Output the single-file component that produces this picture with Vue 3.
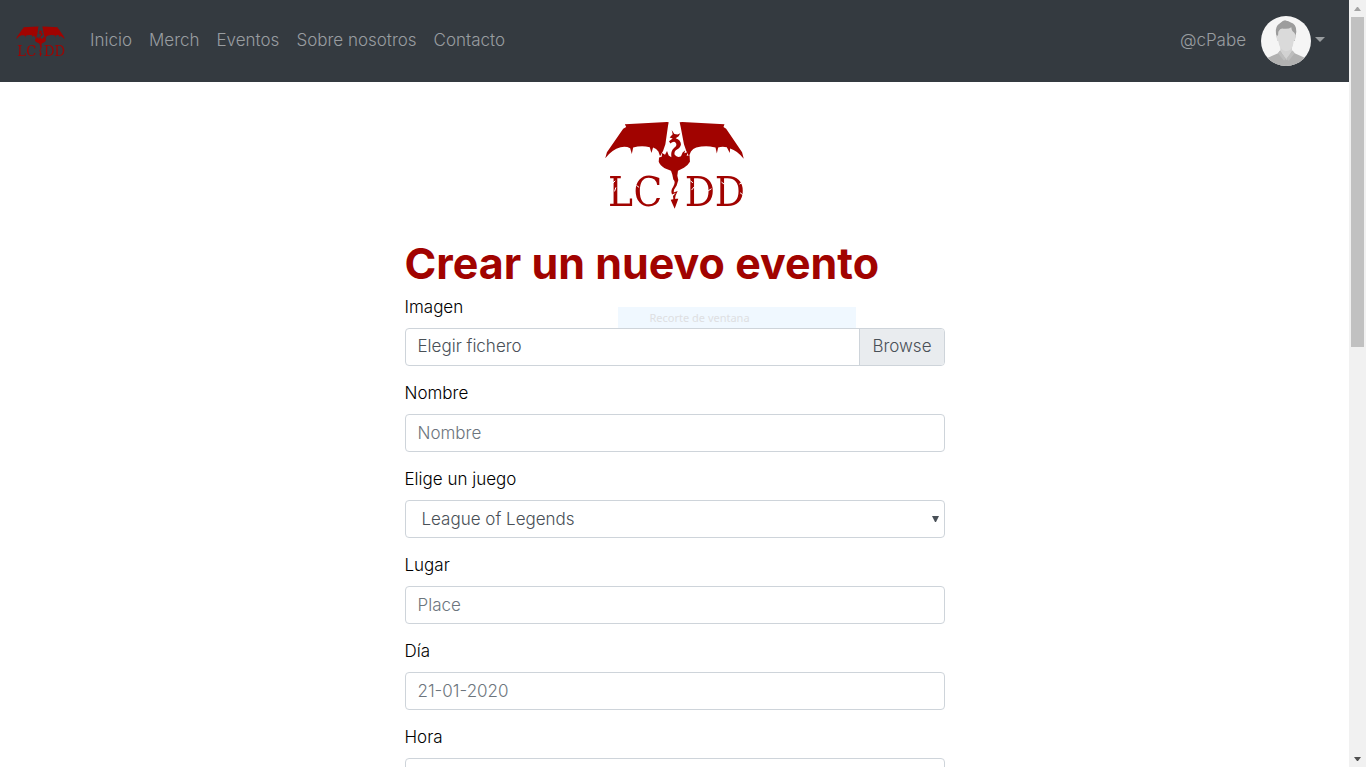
<script setup>
import { ref } from 'vue'

const links = ['Inicio', 'Merch', 'Eventos', 'Sobre nosotros', 'Contacto']
const game = ref('League of Legends')
const name = ref('')
const place = ref('')
const day = ref('')
const hour = ref('')
</script>

<template>
  <div class="window">
    <div class="page">
      <nav class="navbar">
        <a class="brand" href="#" aria-label="LCIDD">
          <svg class="brand-logo" viewBox="27 28 423 265"><use href="#lcidd" /></svg>
        </a>
        <div class="links">
          <a v-for="l in links" :key="l" href="#">{{ l }}</a>
        </div>
        <a class="user" href="#">
          <span class="user-name">@cPabe</span>
          <svg class="avatar" viewBox="0 0 150 150" aria-hidden="true">
            <clipPath id="round"><circle cx="75" cy="75" r="75" /></clipPath>
            <g clip-path="url(#round)">
              <rect width="150" height="150" fill="#f5f5f5" />
              <path d="M10 150 L18 126 L51 112 L58 103 L75 118 L93 103 L101 112 L133 126 L140 150 Z" fill="#b1b1b1" />
              <path d="M58 92 L93 92 L93 105 L76 132 L58 105 Z" fill="#d2d2d2" />
              <path d="M56 104 L75 128 L69 134 L51 112 Z M95 104 L76 128 L83 134 L101 112 Z" fill="#bdbdbd" />
              <path d="M50 74 L45 54 Q41 31 57 22 Q69 10 76 14 Q83 14 88 19 Q107 25 106 47 L101 75 Z" fill="#9c9c9c" />
              <path d="M52 47 Q58 35 67 38 Q83 40 91 34 Q92 47 100 50 L104 58 L102 72 L98 76 Q96 105 75 106 Q55 104 52 76 L48 72 L46 58 L51 59 Z" fill="#dadada" />
            </g>
          </svg>
          <span class="caret"></span>
        </a>
      </nav>

      <main class="content">
        <svg class="logo" viewBox="27 28 423 265" role="img" aria-label="LCIDD">
          <mask id="wear" maskUnits="userSpaceOnUse" x="27" y="170" width="430" height="125">
            <rect x="27" y="170" width="430" height="125" fill="#fff" />
            <path
              d="M52 216L60 208M58 240L62 228M124 222L132 228M286 208L294 214M290 236L298 226M340 238L350 232M380 212L388 218M434 218L444 212M436 244L444 250"
              fill="none" stroke="#000" stroke-width="3"
            />
          </mask>
          <g id="lcidd">
            <path d="M89 38 L216 31 L221 32 L219 42 L211 98 L204 118 L195 134 L190 120 Q184 111 174 108 L169 124 L164 107 Q139 101 114 108 L110 127 L105 110 Q92 103 76 107 Q50 114 30 140 L35 122 L84 51 L93 46 Z" />
            <path d="M389 38 L262 31 L254 32 L257 45 L267 98 L274 118 L282 134 L288 120 Q294 111 304 108 Q332 101 358 107 L362 108 L366 126 L370 108 Q382 103 396 107 L405 124 L406 111 Q427 117 447 142 L442 122 L394 51 L386 46 Z" />
            <path d="M224 78 L233 68 L230 55 L238 67 L248 69 L256 65 L251 74 L242 80 Q257 85 258 98 Q257 108 246 114 Q236 120 239 130 Q247 140 258 134 L263 123 L271 116 L268 125 L279 121 L275 133 L284 132 L285 151 Q279 162 267 169 L249 178 L247 193 L250 206 L245 222 L237 235 L236 243 L248 239 L242 252 L240 262 L250 262 L239 292 L227 265 L235 264 L234 254 L242 245 L231 249 Q226 238 235 225 Q243 210 235 204 L232 190 L228 178 L209 170 Q195 162 191 151 L192 138 L200 136 L201 124 L210 130 L216 118 L221 132 L229 137 Q226 119 237 109 Q250 100 240 91 Q233 89 226 96 L222 89 L233 81 Z" />
            <g class="lettering" mask="url(#wear)">
              <text x="38" y="284">L</text>
              <text x="115" y="284">C</text>
              <text x="269" y="284">D</text>
              <text x="360" y="284">D</text>
            </g>
          </g>
        </svg>
        <form class="form" @submit.prevent>
          <h1>Crear un nuevo evento</h1>
          <div class="group">
            <label for="image">Imagen</label>
            <div class="snip">Recorte de ventana</div>
            <div class="file">
              <span class="file-name">Elegir fichero</span>
              <span class="file-button">Browse</span>
              <input id="image" type="file" />
            </div>
          </div>
          <div class="group">
            <label for="name">Nombre</label>
            <input id="name" v-model="name" class="control" type="text" placeholder="Nombre" />
          </div>
          <div class="group">
            <label for="game">Elige un juego</label>
            <div class="select">
              <select id="game" v-model="game" class="control">
                <option>League of Legends</option>
              </select>
              <svg class="arrow" viewBox="0 0 7 6" aria-hidden="true"><path d="M0 0H7L4 6H3Z" /></svg>
            </div>
          </div>
          <div class="group">
            <label for="place">Lugar</label>
            <input id="place" v-model="place" class="control" type="text" placeholder="Place" />
          </div>
          <div class="group">
            <label for="day">Día</label>
            <input id="day" v-model="day" class="control" type="text" placeholder="21-01-2020" />
          </div>
          <div class="group">
            <label for="hour">Hora</label>
            <input id="hour" v-model="hour" class="control" type="text" />
          </div>
        </form>
      </main>
    </div>

    <div class="scrollbar" aria-hidden="true">
      <svg class="step" viewBox="0 0 17 17"><path d="M5 11L8 7H9L12 11Z" fill="#a3a3a3" /></svg>
      <div class="track"><div class="thumb"></div></div>
      <svg class="step" viewBox="0 0 17 17"><path d="M5 7H12L9 11H8Z" fill="#505050" /></svg>
    </div>
  </div>
</template>

<style>
body {
  margin: 0;
  background: #fff;
}
</style>

<style scoped>
* {
  box-sizing: border-box;
}
.window {
  display: flex;
  height: 100vh;
  overflow: hidden;
  font-family: Inter, "Liberation Sans", sans-serif;
  font-size: 17px;
  font-weight: 300;
  line-height: 24px;
  color: #000;
}
.page {
  flex: 1;
  min-width: 0;
  overflow: hidden;
}
.navbar {
  display: flex;
  align-items: center;
  padding: 16px;
  background: #343a40;
}
.navbar a {
  color: #999da0;
  text-decoration: none;
}
.brand {
  display: flex;
  margin-right: 17px;
}
.brand-logo {
  width: 49px;
  height: 31px;
  fill: #a10300;
}
.links {
  display: flex;
  flex: 1;
  gap: 1px;
  padding-bottom: 2px;
}
.links a {
  padding: 8px;
}
.user {
  display: flex;
  align-items: center;
  padding-right: 8px;
}
.user-name {
  padding-bottom: 2px;
}
.avatar {
  width: 50px;
  height: 50px;
  margin-left: 15px;
}
.caret {
  margin: 0 0 4px 4px;
  border: 5px solid transparent;
  border-top-color: #999da0;
  border-bottom: 0;
}
.content {
  display: flex;
  flex-direction: column;
  align-items: center;
  padding-top: 39px;
}
.logo {
  width: 141px;
  height: 88px;
  margin-bottom: 30px;
  overflow: visible;
  fill: #a10300;
}
.lettering {
  font-family: "DejaVu Serif Condensed", "DejaVu Serif", serif;
  font-size: 126px;
  font-weight: 400;
}
.form {
  width: 100%;
  max-width: 540px;
}
h1 {
  margin: 0 0 8px;
  font-size: 43px;
  font-weight: 700;
  line-height: 48px;
  color: #a10300;
}
.group {
  position: relative;
  margin-bottom: 16px;
}
.group:first-of-type {
  padding-top: 1px;
}
label {
  display: block;
  width: fit-content;
  margin-bottom: 10px;
  line-height: 22px;
}
.control {
  display: block;
  width: 100%;
  height: 38px;
  padding: 6px 12px;
  border: 1px solid #ced4da;
  border-radius: 4px;
  background: #fff;
  color: #495057;
  font: inherit;
}
.control::placeholder {
  color: #6c757d;
  opacity: 1;
}
.select {
  position: relative;
}
select.control {
  appearance: none;
  padding-left: 16px;
}
.arrow {
  position: absolute;
  right: 6px;
  top: 16px;
  width: 7px;
  height: 6px;
  fill: #495057;
  pointer-events: none;
}
.file {
  position: relative;
  display: flex;
  height: 38px;
  overflow: hidden;
  border: 1px solid #ced4da;
  border-radius: 4px;
  background: #fff;
  color: #495057;
  line-height: 35px;
}
.file-name {
  flex: 1;
  padding: 0 12px;
}
.file-button {
  padding: 0 12px;
  border-left: 1px solid #ced4da;
  background: #e9ecef;
}
.file input {
  position: absolute;
  inset: 0;
  width: 100%;
  opacity: 0;
}
.snip {
  position: absolute;
  top: 12px;
  left: 213px;
  width: 238px;
  height: 21px;
  padding-left: 32px;
  background: #f0f8ff;
  color: #dedfe2;
  font-family: "Noto Sans", sans-serif;
  font-size: 11px;
  font-weight: 400;
  line-height: 21px;
}
.scrollbar {
  display: flex;
  flex-direction: column;
  width: 17px;
  background: #f1f1f1;
}
.step {
  width: 17px;
  height: 17px;
}
.track {
  flex: 1;
  padding: 0 2px;
}
.thumb {
  height: 45%;
  background: #c1c1c1;
}
</style>
